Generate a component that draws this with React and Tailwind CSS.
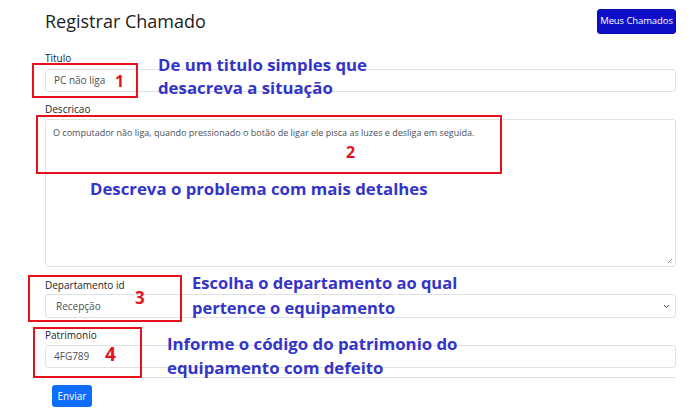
import React from 'react';

const ui = { fontFamily: '"Open Sans", "Noto Sans", sans-serif' };

function Field({ label, className = '', children }) {
  return (
    <div className={className}>
      <label className="block text-[10px] leading-[14px] text-[#212529]">{label}</label>
      {children}
    </div>
  );
}

// red numbered box drawn over the screenshot
function Marker({ box, pad, size, n }) {
  return (
    <div className={`absolute border-2 border-[#e5121b] ${box}`}>
      <div className={`font-bold text-[#e5121b] ${pad} ${size}`}>{n}</div>
    </div>
  );
}

export default function App() {
  return (
    <div className="relative w-[700px] h-[415px] overflow-hidden bg-white" style={ui}>
      <div className="pl-[45px] pr-[24px]">
        {/* header */}
        <div className="flex items-center justify-between pt-[9px]">
          <h3 className="text-[18px] font-medium leading-[25px] text-[#1b1e21]">Registrar Chamado</h3>
          <button className="h-[25px] w-[79px] rounded-[3px] bg-[#0e0ec9] border border-[#0a0aa8] text-white text-[9.5px] tracking-[-0.1px]">
            Meus Chamados
          </button>
        </div>

        <Field label="Titulo" className="mt-[17px]">
          <div className="mt-[4px] h-[23px] border border-[#dee2e6] rounded-[3px] px-[8px] flex items-center text-[10px] text-[#495057]">
            PC não liga
          </div>
        </Field>

        <Field label="Descricao" className="mt-[10px]">
          <div className="relative mt-[3px] h-[148px] border border-[#dee2e6] rounded-[3px] px-[7px] pt-[6px] text-[9px] text-[#495057]">
            O computador não liga, quando pressionado o botão de ligar ele pisca as luzes e desliga em seguida.
            <svg className="absolute right-[2px] bottom-[2px]" width="6" height="6" viewBox="0 0 6 6">
              <path d="M5 1 1 5M5 3.5 3.5 5" stroke="#777" strokeWidth="0.8" />
            </svg>
          </div>
        </Field>

        <Field label="Departamento id" className="mt-[11px]">
          <div className="mt-[2px] h-[24px] border border-[#dee2e6] rounded-[3px] pl-[10px] pr-[5px] flex items-center justify-between text-[10px] text-[#495057]">
            <span>Recepção</span>
            <svg width="7" height="5" viewBox="0 0 7 5" fill="none">
              <path d="M1 1l2.5 2.5L6 1" stroke="#444" strokeWidth="1" />
            </svg>
          </div>
        </Field>

        <Field label="Patrimonio" className="mt-[10px]">
          <div className="mt-[3px] h-[23px] border border-[#dee2e6] rounded-[3px] px-[8px] flex items-center text-[10px] text-[#495057]">
            4FG789
          </div>
        </Field>

        <div className="mt-[9px] h-px bg-[#dee2e6]" />

        <button className="mt-[7px] ml-[7px] h-[22px] w-[40px] rounded-[3px] bg-[#0d6efd] text-white text-[10px]">
          Enviar
        </button>
      </div>

      {/* annotations */}
      <Marker box="left-[32px] top-[63px] w-[106px] h-[35px]" pad="pl-[81px] pt-[6px]" size="text-[16px] leading-[20px]" n="1" />
      <div className="absolute left-[158px] top-[53px] text-[16.8px] font-bold leading-[23px] text-[#3434c8]">
        <div>De um titulo simples que</div>
        <div>desacreva a situação</div>
      </div>

      <Marker box="left-[36px] top-[115px] w-[466px] h-[59px]" pad="pl-[308px] pt-[25px]" size="text-[16px] leading-[20px]" n="2" />
      <div className="absolute left-[90px] top-[177px] text-[16.8px] font-bold leading-[23px] text-[#3434c8]">
        Descreva o problema com mais detalhes
      </div>

      <Marker box="left-[28px] top-[275px] w-[154px] h-[47px]" pad="pl-[105px] pt-[11px]" size="text-[17px] leading-[20px]" n="3" />
      <div className="absolute left-[192px] top-[270px] text-[16.5px] font-bold leading-[25px] text-[#3434c8]">
        <div>Escolha o departamento ao qual</div>
        <div>pertence o equipamento</div>
      </div>

      <Marker box="left-[33px] top-[327px] w-[109px] h-[51px]" pad="pl-[70px] pt-[14px]" size="text-[19px] leading-[22px]" n="4" />
      <div className="absolute left-[167px] top-[332px] text-[16.8px] font-bold leading-[24px] text-[#3434c8]">
        <div>Informe o código do patrimonio do</div>
        <div>equipamento com defeito</div>
      </div>
    </div>
  );
}
